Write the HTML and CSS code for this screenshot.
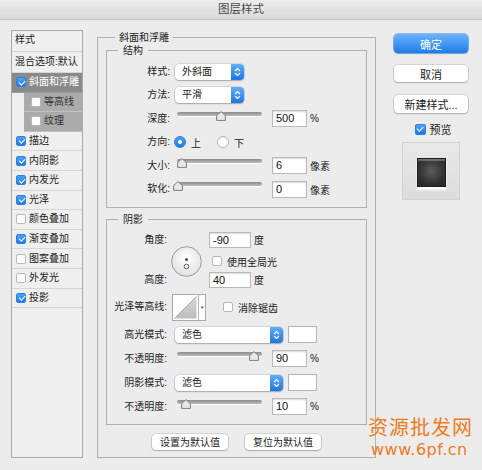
FILE: index.html
```html
<!DOCTYPE html>
<html lang="zh">
<head>
<meta charset="utf-8">
<title>图层样式</title>
<link rel="stylesheet" href="styles.css">
</head>
<body>
<div class="titlebar">图层样式</div>
<div class="content">
  <div class="sidebar">
    <div class="srow head">样式</div>
    <div class="srow blend">混合选项:默认</div>
    <div class="srow selected"><span class="cb on"></span>斜面和浮雕</div>
    <div class="srow sub"><div class="subin"><span class="cb"></span>等高线</div></div>
    <div class="srow sub"><div class="subin"><span class="cb"></span>纹理</div></div>
    <div class="srow"><span class="cb on"></span>描边</div>
    <div class="srow"><span class="cb on"></span>内阴影</div>
    <div class="srow"><span class="cb on"></span>内发光</div>
    <div class="srow"><span class="cb on"></span>光泽</div>
    <div class="srow"><span class="cb"></span>颜色叠加</div>
    <div class="srow"><span class="cb on"></span>渐变叠加</div>
    <div class="srow"><span class="cb"></span>图案叠加</div>
    <div class="srow"><span class="cb"></span>外发光</div>
    <div class="srow"><span class="cb on"></span>投影</div>
  </div>

  <fieldset class="group outer">
    <legend>斜面和浮雕</legend>

    <fieldset class="group inner struct">
      <legend>结构</legend>
      <div class="rows">
        <div class="row">
          <span class="lbl">样式:</span>
          <div class="sel w69"><span class="sv">外斜面</span><span class="arr"><svg width="7" height="10" viewBox="0 0 7 10"><path d="M1 4 L3.5 1.5 L6 4 M1 6 L3.5 8.5 L6 6" fill="none" stroke="#fff" stroke-width="1.2"/></svg></span></div>
        </div>
        <div class="row">
          <span class="lbl">方法:</span>
          <div class="sel w69"><span class="sv">平滑</span><span class="arr"><svg width="7" height="10" viewBox="0 0 7 10"><path d="M1 4 L3.5 1.5 L6 4 M1 6 L3.5 8.5 L6 6" fill="none" stroke="#fff" stroke-width="1.2"/></svg></span></div>
        </div>
        <div class="row">
          <span class="lbl">深度:</span>
          <div class="slider"><div class="track"></div><svg class="thumb" style="left:52%" viewBox="0 0 10 10"><path d="M5 0.6 L9.4 4.6 V9.4 H0.6 V4.6 Z" fill="#e8e8e8" stroke="#707070" stroke-width="0.9"/></svg></div>
          <span class="num">500</span><span class="unit">%</span>
        </div>
        <div class="row">
          <span class="lbl">方向:</span>
          <span class="radio on"></span><span class="rtext">上</span>
          <span class="radio off"></span><span class="rtext">下</span>
        </div>
        <div class="row">
          <span class="lbl">大小:</span>
          <div class="slider"><div class="track"></div><svg class="thumb" style="left:6%" viewBox="0 0 10 10"><path d="M5 0.6 L9.4 4.6 V9.4 H0.6 V4.6 Z" fill="#e8e8e8" stroke="#707070" stroke-width="0.9"/></svg></div>
          <span class="num">6</span><span class="unit">像素</span>
        </div>
        <div class="row">
          <span class="lbl">软化:</span>
          <div class="slider"><div class="track"></div><svg class="thumb" style="left:1%" viewBox="0 0 10 10"><path d="M5 0.6 L9.4 4.6 V9.4 H0.6 V4.6 Z" fill="#e8e8e8" stroke="#707070" stroke-width="0.9"/></svg></div>
          <span class="num">0</span><span class="unit">像素</span>
        </div>
      </div>
    </fieldset>

    <fieldset class="group inner shadow">
      <legend>阴影</legend>
      <div class="angle">
        <span class="lbl a1">角度:</span>
        <svg class="dial" width="31" height="31" viewBox="0 0 31 31">
          <defs><radialGradient id="dg" cx="50%" cy="40%" r="60%"><stop offset="0" stop-color="#ffffff"/><stop offset="1" stop-color="#e2e2e2"/></radialGradient></defs>
          <circle cx="15.5" cy="15.5" r="14.8" fill="url(#dg)" stroke="#9a9a9a" stroke-width="1"/>
          <circle cx="15.5" cy="13.5" r="1.5" fill="#4a4a4a"/>
          <circle cx="15.5" cy="20.5" r="2.3" fill="none" stroke="#555" stroke-width="0.9"/>
        </svg>
        <span class="num n42 a2">-90</span><span class="unit a3">度</span>
        <div class="global"><span class="cb"></span>使用全局光</div>
        <span class="lbl a4">高度:</span>
        <span class="num n42 a5">40</span><span class="unit a6">度</span>
      </div>
      <div class="srows">
        <div class="row contour">
          <span class="lbl">光泽等高线:</span>
          <svg class="cbox" width="34" height="27" viewBox="0 0 34 27">
            <defs><linearGradient id="cg" x1="0" y1="0" x2="0" y2="1"><stop offset="0" stop-color="#d6d6d6"/><stop offset="1" stop-color="#bdbdbd"/></linearGradient></defs>
            <rect x="0.5" y="0.5" width="33" height="26" fill="#fff" stroke="#a8a8a8"/>
            <path d="M2.5 24.5 L24.5 2.5 V24.5 Z" fill="url(#cg)"/>
            <path d="M2.5 24.5 L24.5 2.5" stroke="#9a9a9a" stroke-width="0.8"/>
            <line x1="26.5" y1="0.5" x2="26.5" y2="26.5" stroke="#b5b5b5"/>
            <path d="M28.5 12.5 L32 12.5 L30.25 15 Z" fill="#666"/>
          </svg>
          <span class="aa"><span class="cb"></span>消除锯齿</span>
        </div>
        <div class="row r16">
          <span class="lbl">高光模式:</span>
          <div class="sel w108"><span class="sv">滤色</span><span class="arr"><svg width="7" height="10" viewBox="0 0 7 10"><path d="M1 4 L3.5 1.5 L6 4 M1 6 L3.5 8.5 L6 6" fill="none" stroke="#fff" stroke-width="1.2"/></svg></span></div>
          <span class="swatch"></span>
        </div>
        <div class="row">
          <span class="lbl">不透明度:</span>
          <div class="slider"><div class="track"></div><svg class="thumb" style="left:90%" viewBox="0 0 10 10"><path d="M5 0.6 L9.4 4.6 V9.4 H0.6 V4.6 Z" fill="#e8e8e8" stroke="#707070" stroke-width="0.9"/></svg></div>
          <span class="num">90</span><span class="unit">%</span>
        </div>
        <div class="row r16">
          <span class="lbl">阴影模式:</span>
          <div class="sel w108"><span class="sv">滤色</span><span class="arr"><svg width="7" height="10" viewBox="0 0 7 10"><path d="M1 4 L3.5 1.5 L6 4 M1 6 L3.5 8.5 L6 6" fill="none" stroke="#fff" stroke-width="1.2"/></svg></span></div>
          <span class="swatch"></span>
        </div>
        <div class="row">
          <span class="lbl">不透明度:</span>
          <div class="slider"><div class="track"></div><svg class="thumb" style="left:10%" viewBox="0 0 10 10"><path d="M5 0.6 L9.4 4.6 V9.4 H0.6 V4.6 Z" fill="#e8e8e8" stroke="#707070" stroke-width="0.9"/></svg></div>
          <span class="num">10</span><span class="unit">%</span>
        </div>
      </div>
    </fieldset>

    <div class="defbtns">
      <span class="btn small">设置为默认值</span>
      <span class="btn small">复位为默认值</span>
    </div>
  </fieldset>

  <div class="right">
    <span class="btn big primary">确定</span>
    <span class="btn big cancel">取消</span>
    <span class="btn big newstyle">新建样式...</span>
    <div class="preview-check"><span class="cb on big-cb"></span>预览</div>
    <div class="preview"><div class="psq"></div></div>
  </div>
</div>

<div class="wm">
  <div class="wm1">资源批发网</div>
  <div class="wm2">www.6pf.cn</div>
</div>
</body>
</html>
```

FILE: styles.css
```css
* { box-sizing: border-box; }
html, body { margin: 0; padding: 0; }
body {
  width: 482px;
  height: 470px;
  background: #ececec;
  font-family: "Liberation Sans", "Noto Sans CJK SC", sans-serif;
  font-size: 10px;
  color: #222;
  overflow: hidden;
  position: relative;
}

.titlebar {
  height: 20px;
  border-bottom: 1px solid #c6c6c6;
  background: linear-gradient(#ededed, #dadada);
  text-align: center;
  font-size: 11.5px;
  line-height: 19px;
  color: #4a4a4a;
}

.content {
  display: flex;
  align-items: flex-start;
  padding: 10px 0 0 11px;
}

/* ---------- sidebar ---------- */
.sidebar {
  width: 72px;
  height: 428px;
  border: 1px solid #a9a9a9;
  background: #efefef;
  flex: none;
}
.srow {
  height: 19.6px;
  border-bottom: 1px solid #d6d6d6;
  display: flex;
  align-items: center;
  padding-left: 4px;
  white-space: nowrap;
  line-height: 12px;
}
.srow.head { height: 21px; padding-left: 3px; align-items: flex-start; padding-top: 3px; }
.srow.blend { height: 21px; padding-left: 3px; }
.srow.selected { background: #8a8a8a; color: #fff; border-bottom-color: #9a9a9a; }
.srow.sub { padding-left: 12px; border-bottom: none; }
.subin {
  flex: 1;
  height: 100%;
  background: #ababab;
  border-bottom: 1px solid #c2c2c2;
  display: flex;
  align-items: center;
  padding-left: 7px;
  color: #333;
}

.cb {
  width: 10px;
  height: 10px;
  border-radius: 2px;
  background: #fff;
  border: 1px solid #b8b8b8;
  margin-right: 3px;
  flex: none;
  position: relative;
  display: inline-block;
}
.cb.on {
  background: linear-gradient(#4da2f7, #1f7ce6);
  border-color: #2b80e2;
}
.cb.on::after {
  content: "";
  position: absolute;
  left: 2.6px;
  top: 0.4px;
  width: 2.6px;
  height: 5.4px;
  border: solid #fff;
  border-width: 0 1.4px 1.4px 0;
  transform: rotate(45deg);
}

/* ---------- group boxes ---------- */
.group {
  border: 1px solid #b0b0b0;
  margin: 0;
  padding: 0;
  min-width: 0;
}
.group > legend {
  font-size: 10px;
  line-height: 12px;
  padding: 0 4px;
  margin-left: 9px;
}
.outer {
  width: 279px;
  margin-left: 14px;
  margin-top: 1.5px;
  padding: 0 8px 7px 8px;
  flex: none;
}
.inner > legend { margin-left: 11px; padding: 0 5px; }
.struct { margin-top: 1.2px; padding: 5.3px 0 7.5px 0; }
.shadow { margin-top: 6px; padding: 0 0 7px 0; }

.rows { display: flex; flex-direction: column; gap: 3.5px; }
.srows { display: flex; flex-direction: column; gap: 6px; margin-top: 6px; }

.row {
  display: flex;
  align-items: center;
  height: 20px;
  white-space: nowrap;
}
.row.r16 { height: 16px; }
.row.contour { height: 27px; }

.lbl { width: 63px; text-align: right; flex: none; color: #222; line-height: 12px; }
.shadow .lbl { width: 60px; }

/* select */
.sel {
  display: flex;
  height: 16px;
  border-radius: 4px;
  background: #fff;
  box-shadow: 0 0 0 0.6px rgba(0,0,0,0.18), 0 1px 1.5px rgba(0,0,0,0.22);
  overflow: hidden;
  flex: none;
  margin-left: 5px;
}
.shadow .sel { margin-left: 8px; }
.w69 { width: 69px; }
.w108 { width: 108px; }
.sv { flex: 1; padding-left: 7px; line-height: 16px; }
.arr {
  width: 13px;
  background: linear-gradient(#62adf9, #1b77e5);
  display: flex;
  align-items: center;
  justify-content: center;
}

/* slider */
.slider {
  width: 85px;
  height: 20px;
  position: relative;
  margin-left: 7px;
  flex: none;
  align-self: flex-start;
}
.shadow .slider { margin-left: 10px; }
.track {
  margin-top: 3px;
  height: 4px;
  border-radius: 2px;
  background: linear-gradient(#8b8b8b, #bcbcbc);
  box-shadow: 0 1px 0 rgba(255,255,255,0.7);
}
.thumb {
  position: absolute;
  top: 2px;
  width: 10px;
  height: 10px;
  margin-left: -5px;
}

/* number field */
.num {
  width: 35px;
  height: 17px;
  border: 1px solid #b9b9b9;
  background: #fff;
  box-shadow: inset 0 1px 1.5px rgba(0,0,0,0.15);
  font-size: 11px;
  line-height: 15px;
  padding-left: 3px;
  margin-left: 10px;
  flex: none;
  color: #111;
}
.unit { margin-left: 3px; font-size: 10px; }

/* radio */
.radio {
  width: 12px;
  height: 12px;
  border-radius: 50%;
  flex: none;
  position: relative;
}
.radio.on {
  margin-left: 4px;
  background: linear-gradient(#4fa3f8, #1e7ae6);
  border: 1px solid #2a7fe0;
}
.radio.on::after {
  content: "";
  position: absolute;
  left: 3px;
  top: 3px;
  width: 4px;
  height: 4px;
  border-radius: 50%;
  background: #fff;
}
.radio.off {
  margin-left: 16px;
  background: #fff;
  border: 1px solid #b5b5b5;
  box-shadow: inset 0 1px 1px rgba(0,0,0,0.08);
}
.rtext { margin-left: 5px; }

/* angle block */
.angle {
  display: grid;
  grid-template-columns: 60px 35px 49px auto;
  grid-template-rows: 16px 24px 16px;
  margin-top: 6px;
  align-items: center;
}
.a1 { grid-row: 1; grid-column: 1; }
.dial { grid-row: 1 / 4; grid-column: 2; justify-self: end; margin-top: 3px; }
.a2 { grid-row: 1; grid-column: 3; justify-self: end; }
.a3 { grid-row: 1; grid-column: 4; }
.global {
  grid-row: 2;
  grid-column: 3 / 5;
  display: flex;
  align-items: center;
  padding-left: 10px;
  margin-top: 3px;
  white-space: nowrap;
}
.global .cb { margin-right: 5px; }
.a4 { grid-row: 3; grid-column: 1; }
.a5 { grid-row: 3; grid-column: 3; justify-self: end; }
.a6 { grid-row: 3; grid-column: 4; }
.num.n42 { width: 42px; margin-left: 0; height: 16px; line-height: 14px; }

.cbox { margin-left: 5px; flex: none; }
.aa { display: flex; align-items: center; margin-left: 17px; }
.aa .cb { margin-right: 5px; }

.swatch {
  width: 29px;
  height: 17px;
  margin-left: 5px;
  background: #fff;
  border: 1px solid #b5b5b5;
  flex: none;
}

/* buttons */
.btn {
  display: flex;
  align-items: center;
  justify-content: center;
  background: #fff;
  border-radius: 4px;
  box-shadow: 0 0 0 0.6px rgba(0,0,0,0.2), 0 1px 1.5px rgba(0,0,0,0.2);
  color: #222;
  white-space: nowrap;
}
.defbtns {
  display: flex;
  justify-content: center;
  gap: 17px;
  margin-top: 9px;
}
.btn.small { width: 76px; height: 16px; font-size: 10px; }

.right {
  margin-left: 18px;
  width: 74px;
  display: flex;
  flex-direction: column;
  align-items: center;
  flex: none;
}
.btn.big { width: 74px; font-size: 11px; }
.btn.primary {
  margin-top: 4px;
  height: 19px;
  background: linear-gradient(#6cb3fb, #1c7ce9);
  color: #fff;
  box-shadow: 0 0 0 0.6px #2d84e4, 0 1px 1.5px rgba(0,0,0,0.2);
}
.btn.cancel { margin-top: 12px; height: 17px; }
.btn.newstyle { margin-top: 13px; height: 18px; }

.preview-check {
  margin-top: 10px;
  height: 12px;
  display: flex;
  align-items: center;
  font-size: 11px;
  margin-left: 4px;
}
.preview-check .cb { width: 11px; height: 11px; margin-right: 4px; }

.preview {
  margin-top: 7px;
  width: 58px;
  height: 58px;
  background: linear-gradient(#e9e9e9, #dcdcdc);
  border: 1px solid #d2d2d2;
  display: flex;
  justify-content: center;
  padding-top: 15px;
}
.psq {
  width: 29px;
  height: 29px;
  border: 1px solid #1e1e1e;
  background: radial-gradient(circle at 50% 45%, #5c5c5c, #2a2a2a 75%);
  box-shadow: inset 0 2px 1px rgba(255,255,255,0.3), 0 3px 2px rgba(255,255,255,0.95);
}

/* watermark overlay */
.wm {
  position: absolute;
  left: 368px;
  top: 413px;
  color: #f07b1d;
}
.wm1 {
  font-family: "Noto Sans CJK SC", sans-serif;
  font-size: 20px;
  line-height: 27px;
  letter-spacing: 1px;
}
.wm2 {
  font-family: "DejaVu Sans", sans-serif;
  font-size: 16px;
  line-height: 20px;
  letter-spacing: 0.5px;
  padding-left: 3px;
}
```
